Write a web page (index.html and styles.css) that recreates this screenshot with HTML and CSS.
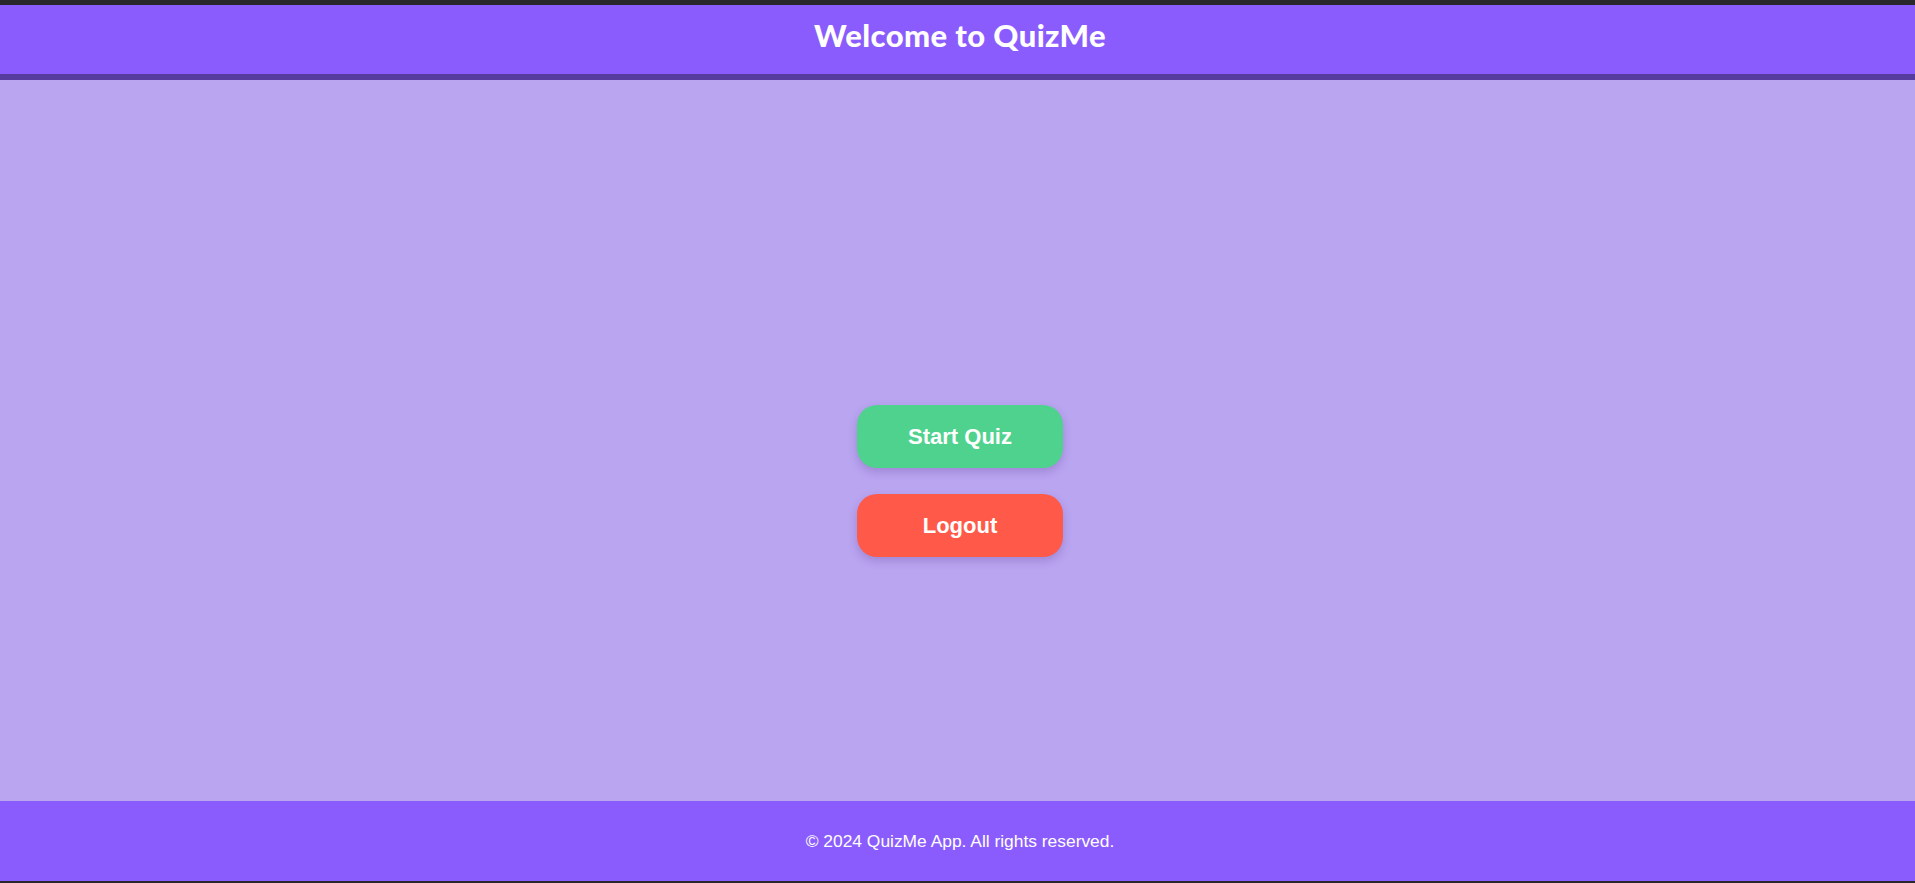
FILE: index.html
```html
<!DOCTYPE html>
<html lang="en">
<head>
<meta charset="utf-8">
<title>QuizMe</title>
<link rel="stylesheet" href="styles.css">
</head>
<body>
<div class="page">
  <header class="site-header">
    <h1 class="site-title">Welcome to QuizMe</h1>
  </header>
  <main class="main">
    <div class="actions">
      <button class="btn btn-start">Start Quiz</button>
      <button class="btn btn-logout">Logout</button>
    </div>
  </main>
  <footer class="site-footer">
    <p class="footer-text">© 2024 QuizMe App. All rights reserved.</p>
  </footer>
</div>
</body>
</html>
```
FILE: styles.css
```css
html, body {
  margin: 0;
  padding: 0;
  height: 100%;
}
body {
  background: #28272c;
  font-family: "Liberation Sans", Arial, sans-serif;
}
.page {
  box-sizing: border-box;
  height: 100vh;
  padding-top: 5px;
  padding-bottom: 2px;
  display: flex;
  flex-direction: column;
}
.site-header {
  height: 69px;
  background: #8b5cfd;
  border-bottom: 6px solid #573c9f;
  display: flex;
  justify-content: center;
  align-items: center;
  flex-shrink: 0;
  padding-left: 5px;
}
.site-title {
  margin: 0 0 9px 0;
  color: #fff;
  font-family: Lato, "Open Sans", sans-serif;
  font-weight: 900;
  font-size: 31px;
  letter-spacing: 0.4px;
}
.main {
  flex: 1;
  background: #baa5f1;
  display: flex;
  justify-content: center;
  align-items: center;
  padding-top: 81px;
  padding-left: 5px;
}
.actions {
  display: flex;
  flex-direction: column;
  gap: 26px;
}
.btn {
  width: 206px;
  height: 63px;
  border: none;
  border-radius: 20px;
  color: #fff;
  font-family: "Liberation Sans", Arial, sans-serif;
  font-weight: bold;
  font-size: 22px;
  box-shadow: 0 4px 10px rgba(60, 30, 120, 0.22);
  cursor: pointer;
}
.btn-start {
  background: #50d28f;
}
.btn-logout {
  background: #ff5a49;
}
.site-footer {
  height: 80px;
  background: #8b5cfd;
  display: flex;
  justify-content: center;
  align-items: center;
  flex-shrink: 0;
  padding-left: 5px;
}
.footer-text {
  margin: 0;
  color: #fff;
  font-size: 17.4px;
}
```
